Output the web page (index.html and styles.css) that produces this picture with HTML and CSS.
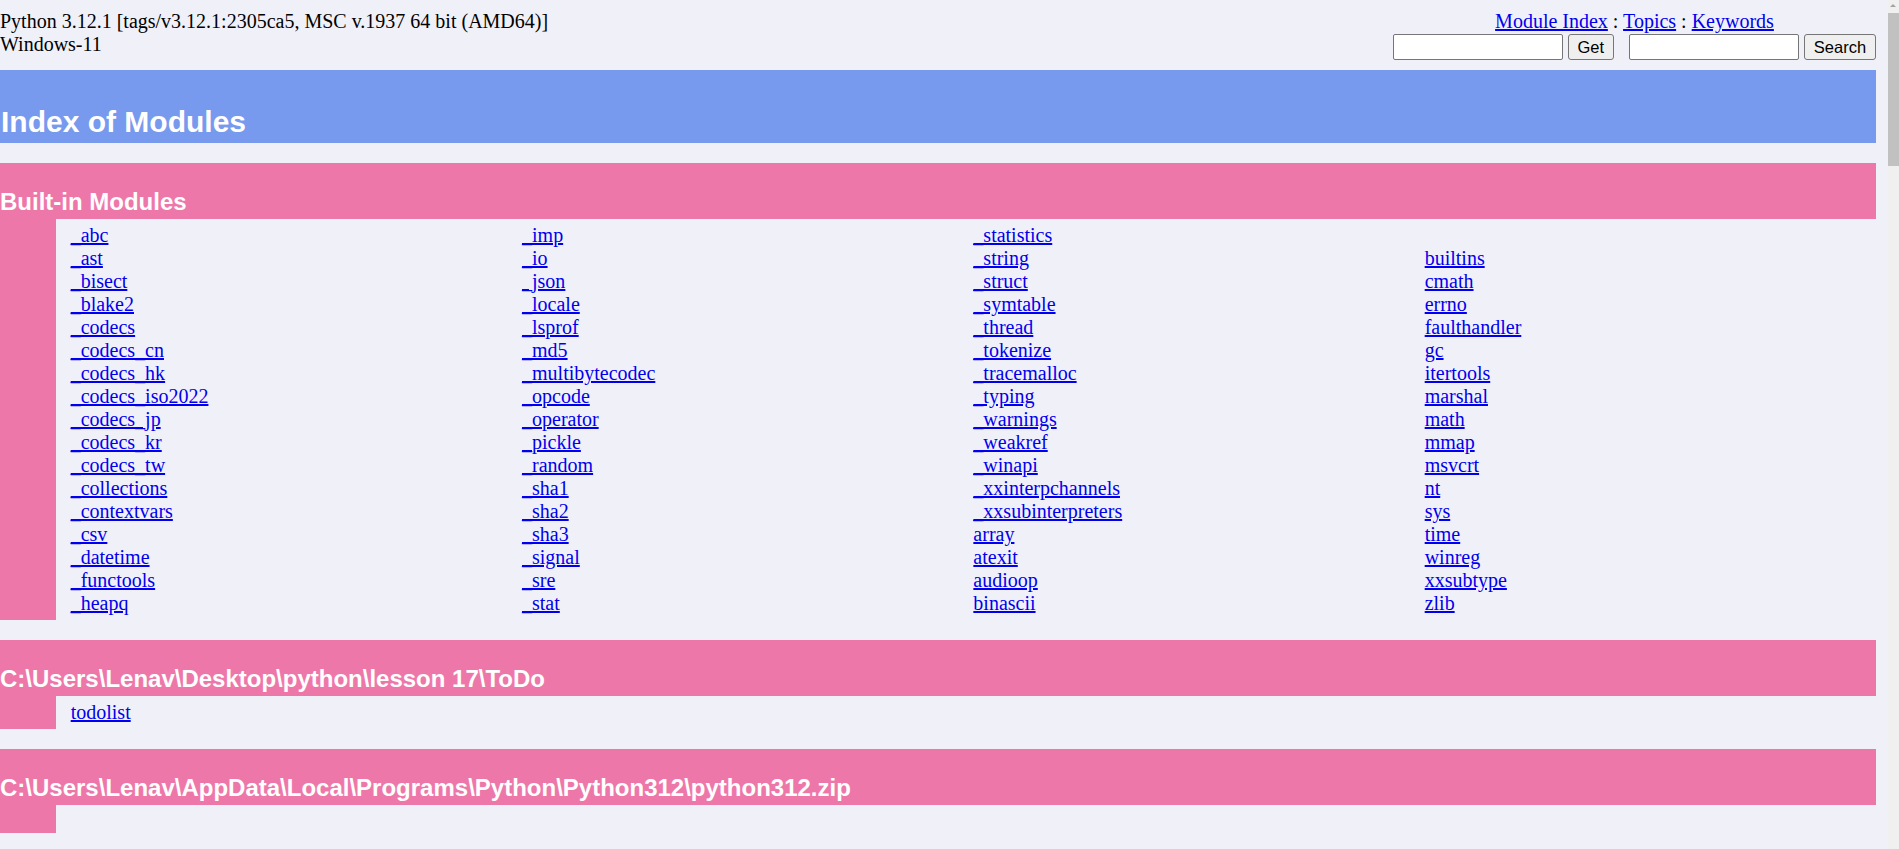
FILE: index.html
```html
<!DOCTYPE html>
<html lang="en">
<head>
<meta charset="utf-8">
<title>Pydoc: Index of Modules</title>
<link rel="stylesheet" href="styles.css">
</head>
<body>
<div class="page">
  <header class="navbar">
    <div class="sysinfo">Python 3.12.1 [tags/v3.12.1:2305ca5, MSC v.1937 64 bit (AMD64)]<br>Windows-11</div>
    <div class="navright">
      <div class="navlinks"><a href="#">Module Index</a> : <a href="#">Topics</a> : <a href="#">Keywords</a></div>
      <div class="forms">
        <form class="search-form"><input type="text" class="key"><button type="button" class="btn btn-get">Get</button></form>
        <form class="search-form"><input type="text" class="key"><button type="button" class="btn btn-search">Search</button></form>
      </div>
    </div>
  </header>

  <div class="heading"><strong class="title">Index of Modules</strong></div>

  <section class="section">
    <div class="section-title"><strong>Built-in Modules</strong></div>
    <div class="section-body">
      <div class="marg"></div>
      <div class="cols">
        <div class="col">
          <a href="#">_abc</a><a href="#">_ast</a><a href="#">_bisect</a><a href="#">_blake2</a><a href="#">_codecs</a><a href="#">_codecs_cn</a><a href="#">_codecs_hk</a><a href="#">_codecs_iso2022</a><a href="#">_codecs_jp</a><a href="#">_codecs_kr</a><a href="#">_codecs_tw</a><a href="#">_collections</a><a href="#">_contextvars</a><a href="#">_csv</a><a href="#">_datetime</a><a href="#">_functools</a><a href="#">_heapq</a>
        </div>
        <div class="col">
          <a href="#">_imp</a><a href="#">_io</a><a href="#">_json</a><a href="#">_locale</a><a href="#">_lsprof</a><a href="#">_md5</a><a href="#">_multibytecodec</a><a href="#">_opcode</a><a href="#">_operator</a><a href="#">_pickle</a><a href="#">_random</a><a href="#">_sha1</a><a href="#">_sha2</a><a href="#">_sha3</a><a href="#">_signal</a><a href="#">_sre</a><a href="#">_stat</a>
        </div>
        <div class="col">
          <a href="#">_statistics</a><a href="#">_string</a><a href="#">_struct</a><a href="#">_symtable</a><a href="#">_thread</a><a href="#">_tokenize</a><a href="#">_tracemalloc</a><a href="#">_typing</a><a href="#">_warnings</a><a href="#">_weakref</a><a href="#">_winapi</a><a href="#">_xxinterpchannels</a><a href="#">_xxsubinterpreters</a><a href="#">array</a><a href="#">atexit</a><a href="#">audioop</a><a href="#">binascii</a>
        </div>
        <div class="col">
          <a href="#">builtins</a><a href="#">cmath</a><a href="#">errno</a><a href="#">faulthandler</a><a href="#">gc</a><a href="#">itertools</a><a href="#">marshal</a><a href="#">math</a><a href="#">mmap</a><a href="#">msvcrt</a><a href="#">nt</a><a href="#">sys</a><a href="#">time</a><a href="#">winreg</a><a href="#">xxsubtype</a><a href="#">zlib</a>
        </div>
      </div>
    </div>
  </section>

  <section class="section">
    <div class="section-title"><strong>C:\Users\Lenav\Desktop\python\lesson 17\ToDo</strong></div>
    <div class="section-body">
      <div class="marg"></div>
      <div class="cols">
        <div class="col"><a href="#">todolist</a></div>
        <div class="col"></div>
        <div class="col"></div>
        <div class="col"></div>
      </div>
    </div>
  </section>

  <section class="section">
    <div class="section-title"><strong>C:\Users\Lenav\AppData\Local\Programs\Python\Python312\python312.zip</strong></div>
    <div class="section-body section-body-empty">
      <div class="marg"></div>
      <div class="cols"></div>
    </div>
  </section>
</div>

<div class="scrollbar"><div class="scroll-arrow"></div><div class="scroll-thumb"></div></div>
</body>
</html>
```

FILE: styles.css
```css
html, body {
  margin: 0;
  padding: 0;
  overflow: hidden;
}

body {
  background: #f0f0f8;
  color: #000;
  font-family: "Liberation Serif", "Times New Roman", serif;
  font-size: 20px;
  line-height: 23px;
}

a {
  color: #0000ee;
  text-decoration: underline;
}

.page {
  width: 1876px;
}

/* ---------- navbar ---------- */
.navbar {
  display: flex;
  justify-content: space-between;
  align-items: flex-start;
  padding-top: 10px;
  height: 50px;
}

.navright {
  display: flex;
  flex-direction: column;
}

.navlinks {
  text-align: center;
  height: 23px;
}

.forms {
  display: flex;
  align-items: flex-start;
  gap: 15.5px;
  padding-top: 0.5px;
}

.search-form {
  display: flex;
  gap: 5.5px;
  margin: 0;
}

.key {
  box-sizing: border-box;
  width: 169.5px;
  height: 26.5px;
  margin: 0;
  padding: 1px 2px;
  border: 1px solid #767676;
  border-radius: 2px;
  background: #fff;
  font-family: "Liberation Sans", Arial, sans-serif;
  font-size: 16.5px;
}

.btn {
  box-sizing: border-box;
  height: 26.5px;
  margin: 0;
  padding: 0;
  border: 1px solid #767676;
  border-radius: 3px;
  background: #efefef;
  color: #000;
  font-family: "Liberation Sans", Arial, sans-serif;
  font-size: 16.5px;
  line-height: 24px;
}

.btn-get {
  width: 45.5px;
}

.btn-search {
  width: 72px;
}

/* ---------- heading ---------- */
.heading {
  margin-top: 10px;
  height: 73px;
  box-sizing: border-box;
  display: flex;
  align-items: flex-end;
  padding: 0 0 4px 1px;
  background: #7799ee;
  color: #fff;
  font-family: "Liberation Sans", Arial, Helvetica, sans-serif;
}

.title {
  font-size: 30px;
  line-height: 34px;
  font-weight: bold;
}

/* ---------- sections ---------- */
.section {
  margin-top: 20px;
}

.section-title {
  height: 56px;
  box-sizing: border-box;
  display: flex;
  align-items: flex-end;
  padding: 0 0 3.5px 0;
  background: #ee77aa;
  color: #fff;
  font-family: "Liberation Sans", Arial, Helvetica, sans-serif;
  font-size: 24px;
  line-height: 28px;
  font-weight: bold;
  white-space: nowrap;
}

.section-body {
  display: flex;
}

.section-body-empty {
  height: 28px;
}

.marg {
  width: 56px;
  flex: none;
  background: #ee77aa;
}

.cols {
  flex: 1;
  display: grid;
  grid-template-columns: repeat(4, 1fr);
  align-items: end;
  padding: 5px 0 5px 14.7px;
}

.col {
  display: flex;
  flex-direction: column;
  align-items: flex-start;
}

/* ---------- fake scrollbar ---------- */
.scrollbar {
  position: fixed;
  top: 0;
  right: 0;
  width: 11px;
  height: 100vh;
  background: #f0f0f0;
}

.scroll-arrow {
  position: absolute;
  top: 4px;
  left: 2px;
  width: 0;
  height: 0;
  border-left: 3.5px solid transparent;
  border-right: 3.5px solid transparent;
  border-bottom: 3.5px solid #a3a3a3;
}

.scroll-thumb {
  position: absolute;
  top: 13px;
  left: 0;
  width: 11px;
  height: 153px;
  background: #c1c1c1;
}
```
